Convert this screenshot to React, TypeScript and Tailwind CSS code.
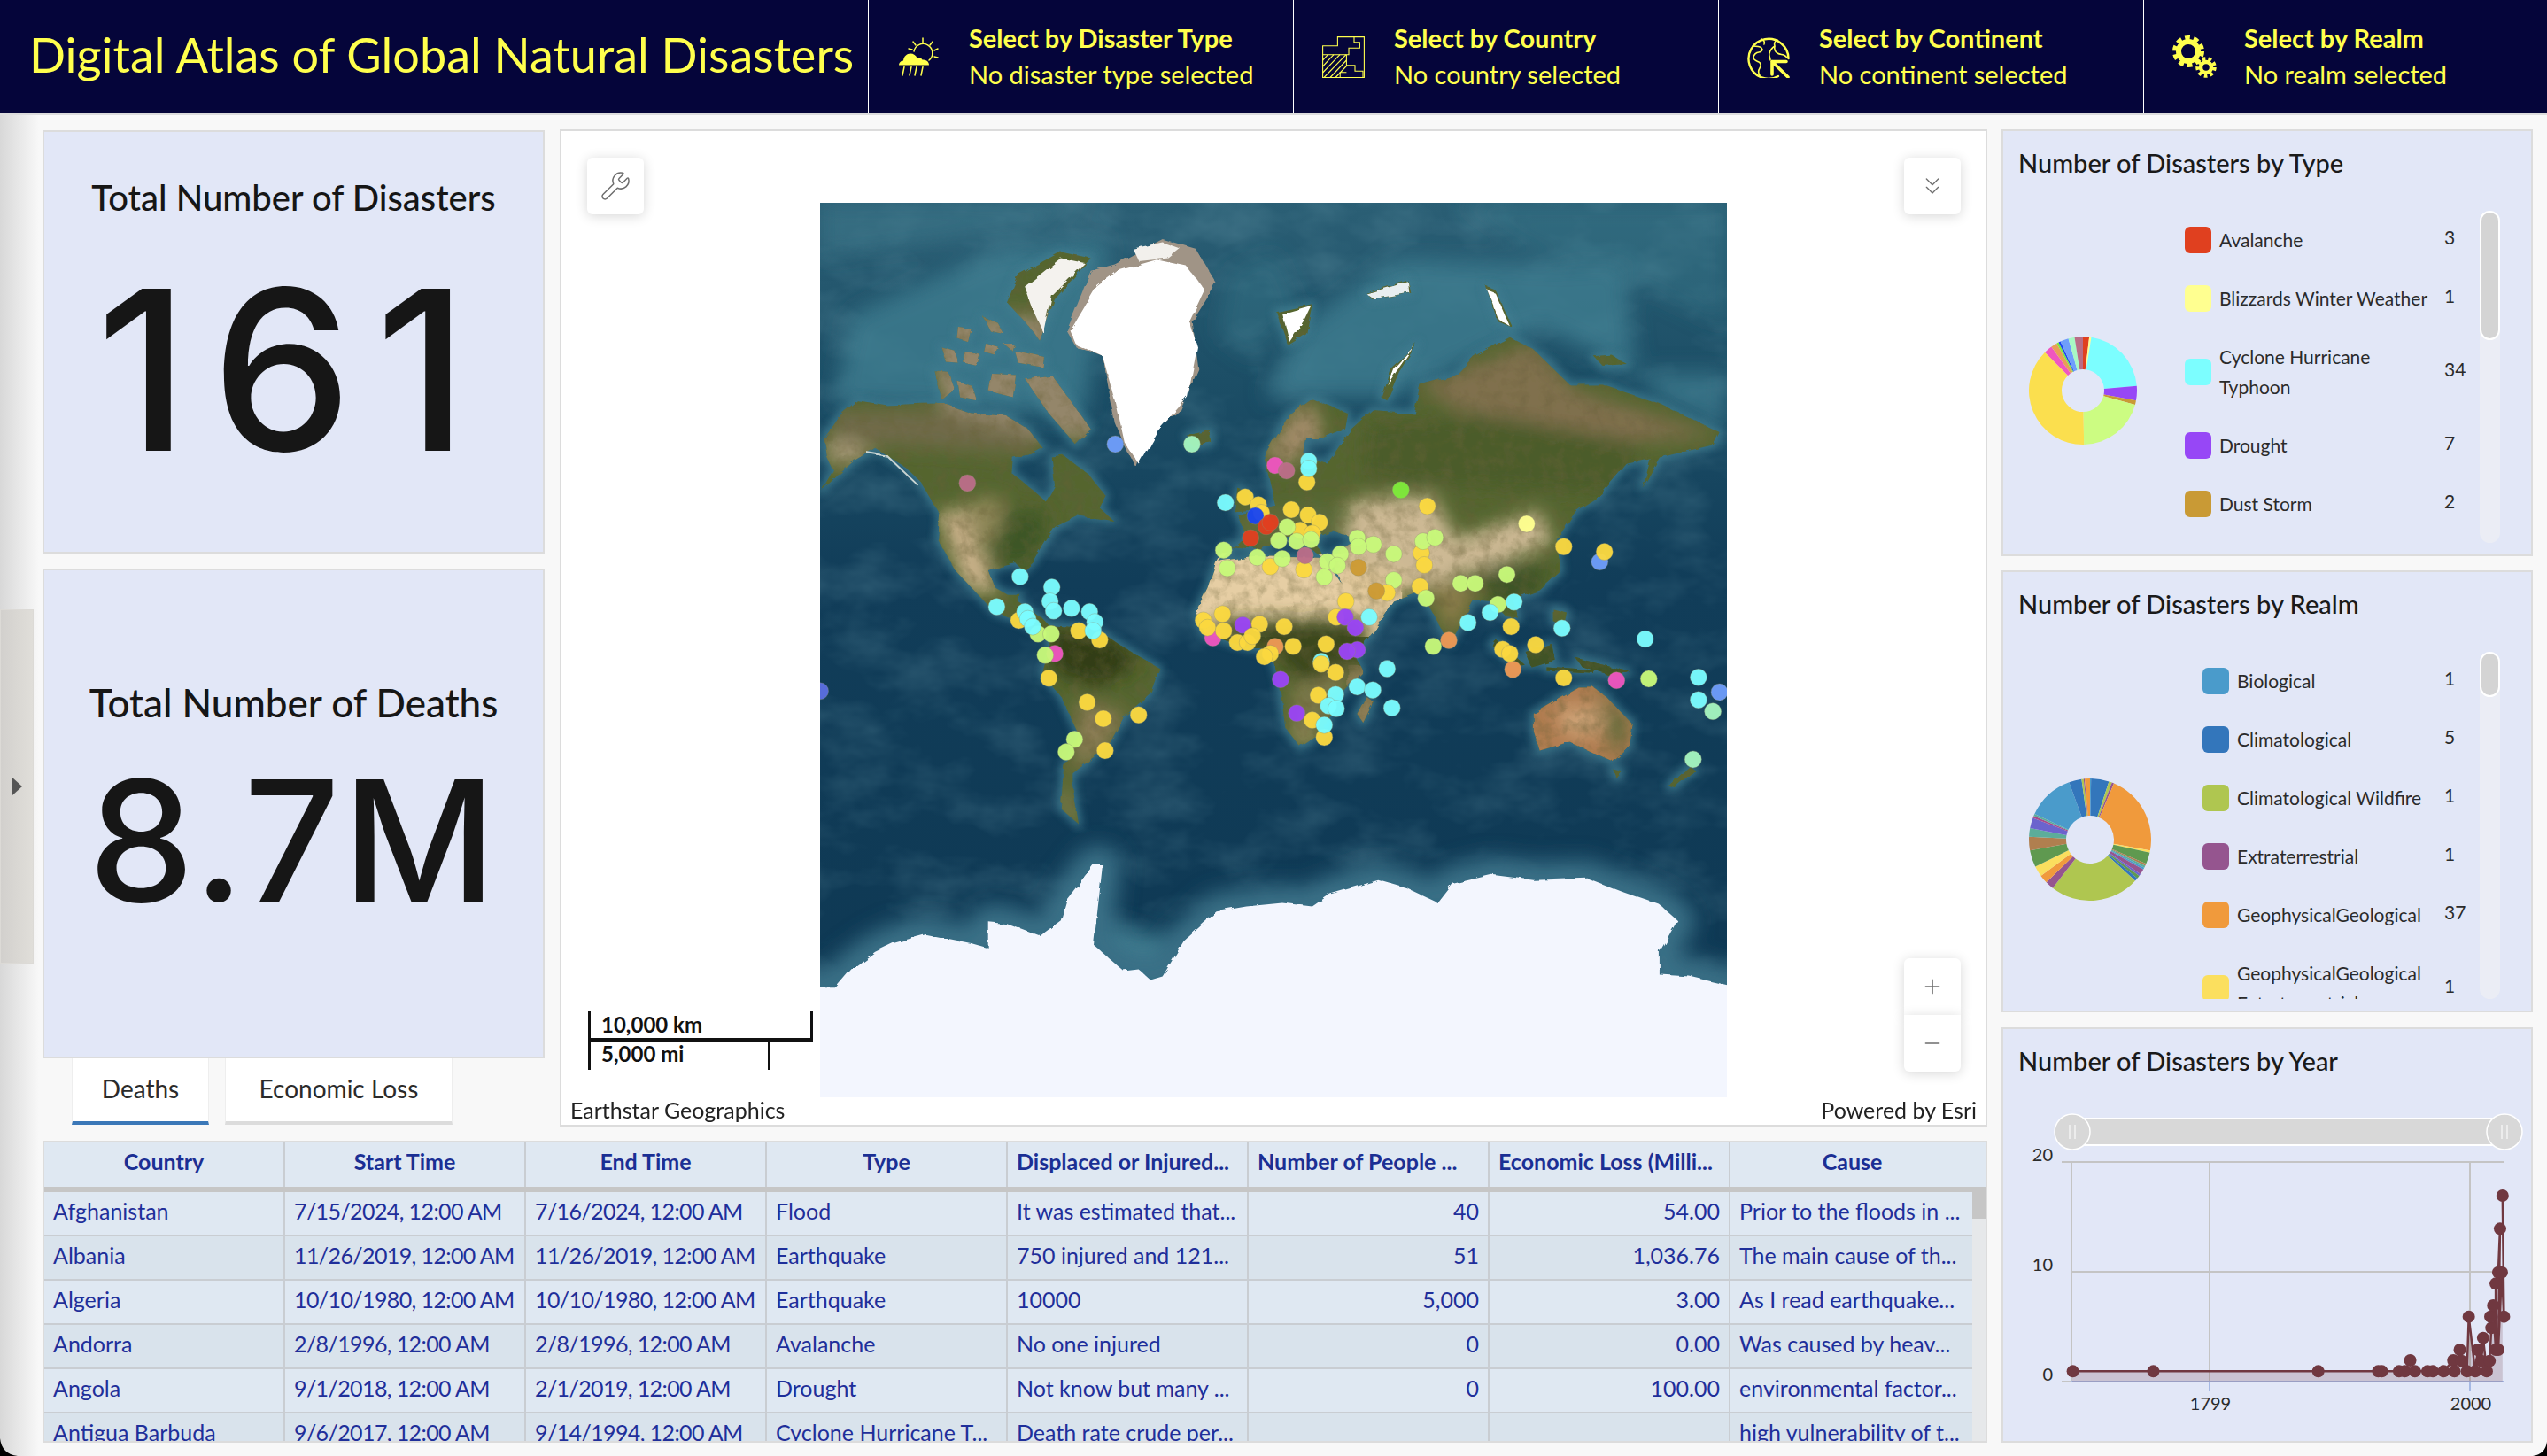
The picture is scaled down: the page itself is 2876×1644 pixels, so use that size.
import { ChevronsDown, Minus, Plus, Wrench } from "lucide-react";

const FONT = "font-['Lato','Open_Sans',sans-serif]";

// map helpers: outlines were traced in two crop spaces, both end up in 1024x1010 map space
const z8 = (x: number, y: number) => [(x - 38) / 1.479, (y - 25) / 2.8];
const z9 = (x: number, y: number) => [(x - 38) / 1.479, y / 2.53 + 411];
const pts = (f: (x: number, y: number) => number[], s: string) =>
  s
    .trim()
    .split(/\s+/)
    .map(p => {
      const [x, y] = p.split(",").map(Number);
      return f(x, y)
        .map(n => n.toFixed(1))
        .join(",");
    })
    .join(" ");

const LAND_N = [
  "45,770 75,690 100,650 150,665 210,660 245,660 290,690 350,700 385,740 410,800 390,820 360,830 358,880 395,935 415,970 430,920 425,830 445,825 485,880 515,950 505,990 528,1030 470,1015 430,1050 410,1110 395,1160 378,1190 365,1165 340,1175 320,1190 330,1240 350,1262 372,1262 368,1285 410,1340 432,1385 400,1375 370,1345 330,1320 300,1260 265,1190 235,1090 238,1010 205,905 180,860 130,800 95,840 60,900 40,935 60,870 50,830",
  "780,830 820,700 860,645 920,690 915,740 880,770 850,770 845,830 885,850 925,740 960,680 1030,690 1040,600 1100,570 1130,510 1190,450 1230,490 1290,600 1345,600 1440,660 1540,750 1530,790 1440,830 1412,925 1425,835 1385,850 1340,950 1300,1000 1268,1090 1275,1190 1240,1250 1195,1280 1205,1340 1185,1335 1160,1285 1130,1280 1090,1420 1055,1300 1040,1255 990,1290 945,1325 905,1215 890,1140 935,1090 895,1060 860,1082 880,1150 830,1080 800,1090 770,1120 715,1110 700,1165 750,1075 735,1010 800,985 790,915",
  "1330,510 1360,505 1385,535 1345,540",
  "240,480 262,492 268,530 248,528",
  "280,495 305,505 300,540 278,530",
  "270,420 290,425 285,465 268,455",
  "310,385 335,405 345,440 322,430",
  "315,470 335,480 330,505 312,495",
  "362,492 412,512 410,545 368,530",
  "345,470 362,470 358,492",
  "228,555 252,560 262,610 240,645",
  "268,590 292,605 300,650 272,640",
  "325,565 365,570 360,640 320,620",
  "380,580 425,570 490,740 465,790 420,690",
  "350,340 370,250 440,180 490,200 430,330 405,460 380,400",
  "650,760 690,745 692,785 660,795",
  "735,925 752,945 762,995 730,1000",
  "800,370 860,345 850,440 820,475",
  "1035,470 990,550 975,640 985,650 1005,560",
  "1150,290 1165,300 1195,420 1170,400",
  "950,310 1020,270 1025,310 960,330",
  "880,1150 700,1200 680,1290",
];
const LAND_S = [
  "700,-15 760,-30 880,-25 905,40 950,120 1000,90 965,180 930,250 945,300 900,380 880,470 840,515 815,460 805,330 790,240 740,225 680,190 665,130 685,60",
  "950,370 962,385 945,445 935,420",
  "420,165 465,170 510,190 545,230 605,290 590,360 545,430 520,510 460,590 460,630 470,735 440,690 445,570 470,480 440,370 410,310 420,250",
  "1230,420 1280,370 1305,345 1330,345 1350,370 1395,450 1390,510 1360,555 1340,540 1290,500 1240,525 1230,470",
  "1165,205 1215,280 1200,285 1160,225",
  "1215,240 1260,220 1265,265 1225,285",
  "1262,120 1285,130 1280,170 1262,155",
  "1300,260 1390,300 1370,315 1310,285",
  "1490,570 1500,580 1465,630 1455,625",
  "1362,578 1378,585 1368,605",
  "1250,285 1330,295 1330,303 1250,295",
];
const ANTARCTICA =
  "-60,1210 38,1200 65,1200 90,1150 130,1100 160,1075 215,1050 290,1075 320,1090 320,1015 350,1020 405,1055 440,1010 450,950 495,850 510,850 495,1080 545,1155 570,1150 590,1180 610,1170 645,1070 700,985 750,970 810,960 860,970 890,935 970,895 1020,920 1070,960 1095,905 1160,880 1230,895 1320,890 1380,930 1440,965 1470,1010 1440,1100 1440,1165 1490,1170 1553,1195 1640,1210 1640,1600 -60,1600";

const REGIONS_N: [string, string][] = [
  ["#6f6b48", "60,680 400,680 400,820 60,780"],
  ["#94866a", "220,380 510,380 510,780 400,760 240,680"],
  ["#cdb48c", "235,1000 285,1000 335,1260 280,1240"],
  ["#8f8758", "285,960 345,960 345,1090 285,1090"],
  ["#3c5628", "345,1000 420,1000 400,1170 320,1170"],
  ["#a89a78", "40,770 110,790 130,830 60,860"],
  ["#4b5c2c", "950,720 1400,680 1400,950 950,900"],
  ["#806f4e", "1040,600 1230,470 1300,620 1540,760 1400,780 1100,680"],
  ["#cdb994", "925,965 1060,950 1100,1090 1240,1000 1260,1100 1130,1190 1040,1250 900,1225"],
  ["#e0c698", "900,1150 1040,1240 960,1300 910,1220"],
  ["#8a7c4a", "1050,1220 1140,1240 1090,1400"],
  ["#3e5226", "1140,1175 1260,1175 1210,1320 1150,1270"],
  ["#5f6d3c", "740,1000 900,980 900,1080 740,1100"],
  ["#a08a68", "780,830 820,700 860,650 880,760 820,860"],
];
const REGIONS_S: [string, string][] = [
  ["#3a471c", "700,150 950,150 950,255 860,360 795,245 690,195"],
  ["#7e7a4c", "820,350 930,280 900,400 840,470"],
  ["#a59368", "820,450 880,470 840,515"],
  ["#313d16", "420,170 520,190 575,275 500,345 430,300"],
  ["#8b7d55", "470,380 550,420 520,510 460,590"],
  ["#a09070", "440,600 470,735 445,700"],
  ["#cfa478", "1270,400 1340,400 1345,480 1280,480"],
  ["#5d6a3a", "1330,345 1395,450 1360,550 1350,440"],
];

const Y = "#fbd940";
const L = "#c8f97a";
const C = "#7bfcff";
const P = "#9a45f5";
const D = "#cc9a33";
const R = "#e04020";
const K = "#ee55c0";
const O = "#ee9955";
const B = "#6e9dfa";
const M = "#a5f5c0";
const S = "#bb6d88";

const MARKERS_N: [number, number, string][] = [
  [531, 788, B], [659, 788, M], [798, 855, K], [817, 872, S], [854, 842, C], [851, 908, Y], [854, 865, C], [284, 911, S],
  [1008, 933, "#7eea3a"], [1052, 984, Y], [1218, 1040, "#ffff90"], [715, 973, C], [748, 955, Y], [770, 980, Y], [775, 1005, Y],
  [765, 1015, "#1a46f0"], [825, 995, Y], [853, 1012, Y], [872, 1035, Y], [840, 1060, Y], [860, 1070, Y], [783, 1048, R], [790, 1035, R],
  [757, 1085, R], [818, 1050, L], [804, 1093, L], [834, 1095, L], [858, 1090, L], [935, 1085, L], [962, 1105, L], [937, 1112, L],
  [712, 1123, L], [768, 1146, L], [790, 1175, Y], [810, 1150, L], [718, 1180, L], [846, 1185, Y], [848, 1140, S], [907, 1135, L],
  [885, 1160, L], [902, 1172, L], [880, 1208, L], [996, 1135, L], [1042, 1132, Y], [1047, 1170, Y], [1045, 1095, L], [1065, 1083, L],
  [996, 1218, L], [985, 1258, Y], [1040, 1238, Y], [1050, 1275, L], [1108, 1228, L], [1132, 1228, L], [1185, 1200, L], [1170, 1295, L],
  [1280, 1112, Y], [1340, 1160, B], [1348, 1128, Y], [937, 1178, D], [967, 1252, D], [916, 1285, Y],
  [372, 1207, C], [425, 1240, C], [422, 1285, C], [428, 1315, C], [458, 1307, C], [333, 1302, C], [370, 1345, Y], [470, 1378, Y],
  [505, 1407, Y], [402, 1388, L], [424, 1388, L], [380, 1318, C], [385, 1340, C], [393, 1365, C], [488, 1318, C], [497, 1350, C],
  [494, 1378, C], [430, 1450, K], [414, 1455, L], [420, 1528, Y],
  [694, 1400, K], [678, 1345, Y], [710, 1325, Y], [685, 1368, Y], [712, 1378, Y], [772, 1357, Y], [813, 1365, Y], [744, 1360, P],
  [735, 1415, Y], [752, 1415, Y], [760, 1395, Y], [798, 1428, O], [828, 1427, Y], [883, 1420, Y], [790, 1450, Y], [780, 1460, Y],
  [875, 1475, C], [875, 1483, Y], [899, 1510, Y], [900, 1335, Y], [915, 1335, P], [932, 1368, P], [955, 1335, C], [935, 1438, P],
  [918, 1443, P], [807, 1532, P], [1120, 1352, C], [1157, 1320, C], [1197, 1287, C], [1277, 1370, C], [1416, 1404, C], [985, 1498, C],
  [1088, 1408, O], [1195, 1500, O], [1062, 1427, L], [1192, 1365, Y], [1233, 1422, Y], [1178, 1437, Y], [1190, 1450, Y], [1280, 1527, Y],
  [1368, 1535, K], [1422, 1530, L], [1505, 1525, C],
];
const MARKERS_S: [number, number, string][] = [
  [935, 343, C], [961, 352, C], [993, 403, C], [870, 367, Y], [899, 365, C], [887, 397, C], [900, 405, C], [860, 438, Y], [880, 487, Y],
  [880, 452, C], [834, 418, P], [484, 387, Y], [511, 434, Y], [570, 423, Y], [514, 525, Y], [463, 493, L], [449, 529, L], [1505, 380, C],
  [1540, 358, B], [1529, 413, M], [1496, 550, M], [38, 355, "#5b6ee0"],
];

const WorldMap = () => (
  <svg viewBox="0 0 1024 1010" className="block h-[1010px] w-[1024px]">
    <defs>
      <linearGradient id="sea" x1="0" y1="0" x2="0" y2="1">
        <stop offset="0" stopColor="#2b5f75" />
        <stop offset="0.2" stopColor="#1c4e66" />
        <stop offset="0.42" stopColor="#113d59" />
        <stop offset="1" stopColor="#0e3853" />
      </linearGradient>
      <filter id="b3" x="-20%" y="-20%" width="140%" height="140%">
        <feGaussianBlur stdDeviation="5" />
      </filter>
      <filter id="b8" x="-20%" y="-20%" width="140%" height="140%">
        <feGaussianBlur stdDeviation="10" />
      </filter>
      <filter id="b14" x="-20%" y="-20%" width="140%" height="140%">
        <feGaussianBlur stdDeviation="12" />
      </filter>
      <filter id="rough" x="-5%" y="-5%" width="110%" height="110%">
        <feTurbulence type="fractalNoise" baseFrequency="0.06" numOctaves="3" seed="4" />
        <feDisplacementMap in="SourceGraphic" scale="6" />
      </filter>
      <filter id="grain" x="0" y="0" width="100%" height="100%">
        <feTurbulence type="fractalNoise" baseFrequency="0.07" numOctaves="4" seed="9" />
        <feColorMatrix values="0 0 0 0 0.14  0 0 0 0 0.12  0 0 0 0 0.04  0 0 0 0.9 -0.36" />
      </filter>
      <filter id="swell" x="0" y="0" width="100%" height="100%">
        <feTurbulence type="fractalNoise" baseFrequency="0.012 0.02" numOctaves="4" seed="21" />
        <feColorMatrix values="0 0 0 0 0.2  0 0 0 0 0.42  0 0 0 0 0.5  0 0 0 0.5 -0.22" />
      </filter>
      <clipPath id="land">
        {LAND_N.map((p, i) => (
          <polygon key={i} points={pts(z8, p)} />
        ))}
        {LAND_S.map((p, i) => (
          <polygon key={i} points={pts(z9, p)} />
        ))}
      </clipPath>
    </defs>
    <rect width="1024" height="1010" fill="url(#sea)" />
    <rect width="1024" height="1010" filter="url(#swell)" />
    {/* continental shelves */}
    <g filter="url(#b14)" fill="#3f7d90">
      <polygon points={pts(z8, "780,640 840,420 1000,200 1380,230 1400,560 1240,420 1000,640")} opacity="0.8" />
      <polygon points={pts(z8, "60,660 90,380 340,170 520,140 480,700 300,680")} opacity="0.8" />
      <polygon points={pts(z8, "700,440 720,240 800,180 840,360 760,520")} opacity="0.35" />
      <polygon points={pts(z8, "1400,560 1553,560 1553,750 1440,650")} opacity="0.7" />
      <polygon points={pts(z8, "38,25 500,25 400,110 38,200")} opacity="0.5" />
      <polygon points={pts(z8, "1100,25 1553,25 1553,420 1420,300 1220,170")} opacity="0.35" />
      <polygon points={pts(z9, "500,1010 640,1070 600,1180 545,1155 500,1090")} />
    </g>
    <g filter="url(#b3)" fill="#3f7d90" stroke="#3f7d90" strokeWidth="8" strokeLinejoin="round" opacity="0.8">
      {LAND_N.map((p, i) => (
        <polygon key={i} points={pts(z8, p)} />
      ))}
      {LAND_S.map((p, i) => (
        <polygon key={i} points={pts(z9, p)} />
      ))}
    </g>
    <g filter="url(#b14)" fill="none" stroke="#3a7187" strokeWidth="40" strokeLinejoin="round">
      <polygon points={pts(z9, ANTARCTICA)} />
    </g>
    {/* land */}
    <g filter="url(#rough)">
      <g clipPath="url(#land)">
        <rect width="1024" height="1010" fill="#54652f" />
        <polygon points={pts(z9, "660,-40 1010,-40 1010,200 660,200")} fill="#e6cea4" />
        <polygon points={pts(z9, "920,280 960,280 960,460 920,460")} fill="#8d7d55" />
        <polygon points={pts(z9, "1220,330 1400,330 1400,560 1220,560")} fill="#b07c50" />
        <polygon points={pts(z9, "1160,200 1400,200 1400,320 1160,320")} fill="#3f5226" />
        <g filter="url(#b8)">
          {REGIONS_N.map(([c, p], i) => (
            <polygon key={i} points={pts(z8, p)} fill={c} />
          ))}
          {REGIONS_S.map(([c, p], i) => (
            <polygon key={i} points={pts(z9, p)} fill={c} />
          ))}
        </g>
        <rect width="1024" height="800" filter="url(#grain)" />
      </g>
    </g>
    {/* ice */}
    <g filter="url(#rough)">
      <polygon points={pts(z8, "450,430 490,240 530,220 610,140 665,170 700,280 660,400 670,550 640,680 580,770 565,860 545,790 530,720 510,510 465,480")} fill="#a09486" />
      <polygon points={pts(z8, "456,430 500,290 535,240 600,205 650,225 680,300 655,400 668,480 652,640 600,750 570,850 545,780 530,650 510,510 465,472")} fill="#fff" />
      <polygon points={pts(z8, "560,170 610,150 640,170 620,200 570,210")} fill="#f2f0ec" />
      <polygon points={pts(z8, "380,290 440,200 480,215 425,320 412,440 395,370")} fill="#f4f2ee" />
      <polygon points={pts(z8, "810,375 858,350 845,400 822,465")} fill="#fff" />
      <polygon points={pts(z8, "1030,478 995,550 985,600 1000,560")} fill="#fff" />
      <polygon points={pts(z8, "1152,300 1165,310 1190,415 1172,395")} fill="#fff" />
      <polygon points={pts(z8, "950,312 1020,275 1022,310 962,328")} fill="#e8eef0" />
      <polyline points={pts(z8, "115,815 150,825 200,915")} fill="none" stroke="#f2f2ea" strokeWidth="2" opacity="0.8" />
      <polygon points={pts(z9, ANTARCTICA)} fill="#f3f6fe" />
    </g>
    {MARKERS_N.map(([x, y, c], i) => {
      const [cx, cy] = z8(x, y);
      return <circle key={i} cx={cx} cy={cy} r="9.5" fill={c} fillOpacity="0.96" stroke="#8f8f70" strokeOpacity="0.35" />;
    })}
    {MARKERS_S.map(([x, y, c], i) => {
      const [cx, cy] = z9(x, y);
      return <circle key={i} cx={cx} cy={cy} r="9.5" fill={c} fillOpacity="0.96" stroke="#8f8f70" strokeOpacity="0.35" />;
    })}
  </svg>
);

const DisasterIcon = () => (
  <svg viewBox="14 10 50 46" className="h-[46px] w-[50px]" fill="none" stroke="#ffff4d" strokeWidth="1.5" strokeLinecap="round">
    <path d="M33 27a10.5 10.5 0 1 1 17 10" />
    <path d="M43 12v5M32 16l3 4M54 16l-3 4M27 24l4 1M60 24l-4 2M60 34l-4-1" />
    <path d="M16 42.5c0-3 2.500-5 5-5 .5-5 4-8 8-8 3.500 0 6.500 2 7.500 5 2.500-1 5 0 6 2 4.500 0 7.500 2 7.500 6Z" fill="#ffff4d" stroke="none" />
    <path d="M22 44.500l-2 9.500M30 44.500l-2 9.500M36 44.500l-2 9.500M43 44.500l-2 9.500" />
  </svg>
);

const CountryIcon = () => (
  <svg viewBox="0 0 48 47" className="h-[47px] w-[48px]" fill="none" stroke="#ffff4d" strokeWidth="1.1">
    <path d="M17.400 .6H47.400V46.500H.6V10.700H17.400Z" />
    <path d="M.6 20.700H30V13.300H42.400V6.700H36V.6" />
    <path d="M27.400 20.700V32.700H37V39.300H46V46.500" />
    <path d="M20.200 46.500V40.700H27.400" />
    <path d="M.6 27L6.500 20.700M.6 34L13 20.700M.6 41L20 20.700M2 46.500L27 20.700M9 46.500L27.400 27M15 46.500L27.400 33.500" />
  </svg>
);

const ContinentIcon = () => (
  <svg viewBox="0 0 48 47" className="h-[47px] w-[48px]" fill="none" stroke="#ffff4d" strokeWidth="2" strokeLinecap="round">
    <path d="M35 45A22.500 22.500 0 1 1 46.500 25" strokeWidth="2.400" />
    <path d="M6 11c4 0 8 0 10 2s0 5-3 5-6 3-6 6 4 4 6 5 3 4 1 7-2 5 0 8" strokeWidth="1.600" />
    <path d="M16 3c3 1 4 4 3 6M34 4c-3 1-4 4-3 7-3 2-5 4-6 8-1 3 1 4 1 8M31 11c-1 4 0 6 3 8s5 1 7 2 3 2 4 3" strokeWidth="1.600" />
    <path d="M28 28.500H44M28 28.500V43M28 28.500L46 46" strokeWidth="3.600" />
  </svg>
);

const RealmIcon = () => (
  <svg viewBox="0 0 50 48" className="h-[48px] w-[50px]" fill="none" stroke="#ffff4d">
    <circle cx="18" cy="18" r="11" strokeWidth="6" />
    <circle cx="18" cy="18" r="15" strokeWidth="6" strokeDasharray="5.500 4" />
    <circle cx="38" cy="36" r="6" strokeWidth="4.500" />
    <circle cx="38" cy="36" r="9.500" strokeWidth="4.500" strokeDasharray="3.600 3.100" />
  </svg>
);

const HEADER_CELLS = [
  { icon: <DisasterIcon />, title: "Select by Disaster Type", sub: "No disaster type selected" },
  { icon: <CountryIcon />, title: "Select by Country", sub: "No country selected" },
  { icon: <ContinentIcon />, title: "Select by Continent", sub: "No continent selected" },
  { icon: <RealmIcon />, title: "Select by Realm", sub: "No realm selected" },
];

const TYPE_SLICES: [number, string][] = [
  [3, "#e0401f"], [1, "#ffff90"], [34, "#7cfeff"], [7, "#9747f6"], [2, "#c99a35"], [33, "#ccfc82"], [61, "#fbdf4e"],
  [4, "#f056c0"], [3, "#e89f58"], [1, "#7eea3a"], [1, "#1a46f0"], [4, "#6f9efb"], [3, "#a8f8c4"], [4, "#b96d86"],
];
const REALM_SLICES: [number, string][] = [
  [1, "#4a9bcb"], [17, "#3376bb"], [3, "#afc650"], [2, "#95558f"], [77, "#f09a3c"], [2, "#fbdf5e"], [11, "#5f9950"], [2, "#b07f4f"],
  [2, "#5cad9a"], [2, "#4a9bcb"], [5, "#95558f"], [2, "#6b63cd"], [3, "#5f9950"], [3, "#3376bb"], [85, "#afc650"], [8, "#95558f"],
  [8, "#f09a3c"], [10, "#fbdf5e"], [16, "#5f9950"], [13, "#b07f4f"], [8, "#5cad9a"], [10, "#6b63cd"], [2, "#a84a8a"], [2, "#5cad9a"],
  [45, "#4a9bcb"], [12, "#3376bb"], [2, "#afc650"], [1, "#95558f"], [5, "#f09a3c"],
];

const Donut = ({ slices, r, inner }: { slices: [number, string][]; r: number; inner: number }) => {
  const total = slices.reduce((sum, s) => sum + s[0], 0);
  let run = 0;
  return (
    <svg width={r * 2} height={r * 2} viewBox={`${-r} ${-r} ${r * 2} ${r * 2}`}>
      {slices.map(([v, c], i) => {
        const a0 = (run / total) * Math.PI * 2;
        run += v;
        const a1 = (run / total) * Math.PI * 2;
        const big = a1 - a0 > Math.PI ? 1 : 0;
        const d = `M${Math.sin(a0) * r} ${-Math.cos(a0) * r}A${r} ${r} 0 ${big} 1 ${Math.sin(a1) * r} ${-Math.cos(a1) * r}L${
          Math.sin(a1) * inner
        } ${-Math.cos(a1) * inner}A${inner} ${inner} 0 ${big} 0 ${Math.sin(a0) * inner} ${-Math.cos(a0) * inner}Z`;
        return <path key={i} d={d} fill={c} />;
      })}
    </svg>
  );
};

const LegendRow = ({ color, label, value }: { color: string; label: string; value: string }) => (
  <div className="flex items-center py-[16px] text-[21px] leading-[34px] text-[#2b2b2b]">
    <div className="mr-[9px] h-[30px] w-[30px] shrink-0 rounded-[6px]" style={{ backgroundColor: color }} />
    <div className="min-w-0 flex-1">{label}</div>
    <div className="-mt-[6px] w-[40px] shrink-0">{value}</div>
  </div>
);

const TYPE_LEGEND = [
  { color: "#e0401f", label: "Avalanche", value: "3" },
  { color: "#ffff90", label: "Blizzards Winter Weather", value: "1" },
  { color: "#7cfeff", label: "Cyclone Hurricane Typhoon", value: "34" },
  { color: "#9747f6", label: "Drought", value: "7" },
  { color: "#c99a35", label: "Dust Storm", value: "2" },
];
const REALM_LEGEND = [
  { color: "#4a9bcb", label: "Biological", value: "1" },
  { color: "#3376bb", label: "Climatological", value: "5" },
  { color: "#afc650", label: "Climatological Wildfire", value: "1" },
  { color: "#95558f", label: "Extraterrestrial", value: "1" },
  { color: "#f09a3c", label: "GeophysicalGeological", value: "37" },
  { color: "#fbdf5e", label: "GeophysicalGeological Extraterrestrial", value: "1" },
];

const TABLE_HEAD = ["Country", "Start Time", "End Time", "Type", "Displaced or Injured...", "Number of People ...", "Economic Loss (Milli...", "Cause"];
const TABLE_ROWS = [
  ["Afghanistan", "7/15/2024, 12:00 AM", "7/16/2024, 12:00 AM", "Flood", "It was estimated that...", "40", "54.00", "Prior to the floods in ..."],
  ["Albania", "11/26/2019, 12:00 AM", "11/26/2019, 12:00 AM", "Earthquake", "750 injured and 121...", "51", "1,036.76", "The main cause of th..."],
  ["Algeria", "10/10/1980, 12:00 AM", "10/10/1980, 12:00 AM", "Earthquake", "10000", "5,000", "3.00", "As I read earthquake..."],
  ["Andorra", "2/8/1996, 12:00 AM", "2/8/1996, 12:00 AM", "Avalanche", "No one injured", "0", "0.00", "Was caused by heav..."],
  ["Angola", "9/1/2018, 12:00 AM", "2/1/2019, 12:00 AM", "Drought", "Not know but many ...", "0", "100.00", "environmental factor..."],
  ["Antigua Barbuda", "9/6/2017, 12:00 AM", "9/14/1994, 12:00 AM", "Cyclone Hurricane T...", "Death rate crude per...", "", "", "high vulnerability of t..."],
];

// year chart points, x/y in page pixels
const YEAR_POINTS = [
  [248, 1225], [472, 1225], [931, 1225], [1098, 1225], [1108, 1225], [1156, 1225], [1172, 1225], [1187, 1188], [1200, 1225], [1235, 1225],
  [1250, 1225], [1280, 1225], [1307, 1188], [1310, 1225], [1325, 1152], [1330, 1190], [1345, 1225], [1350, 1040], [1368, 1225], [1375, 1152],
  [1385, 1190], [1390, 1112], [1400, 1225], [1408, 1190], [1413, 1078], [1410, 1040], [1418, 1002], [1425, 1152], [1425, 928], [1432, 890],
  [1437, 742], [1432, 1152], [1442, 890], [1448, 1040], [1444, 630],
].map(([x, y]) => [2240 + x / 2.465, 1140 + y / 3]);

const YearChart = () => {
  const line = YEAR_POINTS.map(p => p.join(",")).join(" ");
  const last = YEAR_POINTS[YEAR_POINTS.length - 1];
  return (
    <svg viewBox="2262 1217 596 410" className="block h-[410px] w-[596px] font-['Lato']">
      <rect x="2339" y="1263" width="489" height="30" fill="#d8d8d8" stroke="#fff" strokeWidth="2" />
      {[2340, 2828].map(x => (
        <g key={x}>
          <circle cx={x} cy="1278" r="20" fill="#d8d8d8" stroke="#fff" strokeWidth="1.500" />
          <path d={`M${x - 3} 1270v16M${x + 3} 1270v16`} stroke="#f2f2f2" strokeWidth="1.500" />
        </g>
      ))}
      <g stroke="#c4c4c4" strokeWidth="2">
        <path d="M2328 1312H2828M2339 1436H2828M2328 1560H2339" />
        <path d="M2339 1312V1560M2495 1312V1560M2789 1312V1560" />
      </g>
      <path d="M2339 1560H2828M2495 1560V1571M2789 1560V1571" stroke="#a5b8e4" strokeWidth="2" fill="none" />
      <polygon points={`2340,1560 2340,1548 ${line} ${last[0]},1560`} fill="#703840" fillOpacity="0.2" />
      <polyline points={line} fill="none" stroke="#703840" strokeWidth="2.500" />
      {YEAR_POINTS.map(([x, y], i) => (
        <circle key={i} cx={x} cy={y} r="7" fill="#703840" />
      ))}
      <g fontSize="20" fill="#2b2b2b">
        <text x="2318" y="1311" textAnchor="end">20</text>
        <text x="2318" y="1435" textAnchor="end">10</text>
        <text x="2318" y="1559" textAnchor="end">0</text>
        <text x="2496" y="1592" textAnchor="middle">1799</text>
        <text x="2790" y="1592" textAnchor="middle">2000</text>
      </g>
    </svg>
  );
};

const ChartPanel = ({ title, className, children }: { title: string; className: string; children: React.ReactNode }) => (
  <div className={`${className} border-2 border-[#dcdcdc] bg-[#e2e7f7]`}>
    <div className="pl-[17px] pt-[18px] pb-[1px] text-[29px] font-medium leading-[36px] text-[#1a1a1a]">{title}</div>
    {children}
  </div>
);

const Scrollbar = ({ thumb }: { thumb: string }) => (
  <div className="h-full w-[23px] shrink-0 rounded-full bg-[#ebedf5]">
    <div className={`${thumb} rounded-full border-2 border-white bg-[#d4d4d4]`} />
  </div>
);

const StatCard = ({ title, value, className, titleClass, valueClass }: { title: string; value: string; className: string; titleClass: string; valueClass: string }) => (
  <div className={`${className} flex flex-col items-center border-2 border-[#dcdcdc] bg-[#e2e7f7] text-[#161616]`}>
    <div className={`${titleClass} font-medium leading-[50px]`}>{title}</div>
    <div className={`${valueClass} font-['Inter',sans-serif] font-medium leading-[200px]`}>{value}</div>
  </div>
);

const MapButton = ({ children, className }: { children: React.ReactNode; className: string }) => (
  <div className={`${className} absolute flex h-[64px] w-[64px] items-center justify-center rounded-[6px] bg-white text-[#6e6e6e] shadow-[0_2px_14px_rgba(0,0,0,0.16)]`}>
    {children}
  </div>
);

export default function App() {
  return (
    <div className={`${FONT} relative h-[1644px] w-[2876px] overflow-hidden bg-[#f8f8f8]`}>
      <header className="flex h-[130px] overflow-hidden border-b-2 border-[#dcdcdc] bg-[#05053a] text-[#ffff4d]">
        <div className="flex w-[980px] shrink-0 items-center whitespace-nowrap pb-[5px] pl-[33px] text-[54px] leading-none">Digital Atlas of Global Natural Disasters</div>
        {HEADER_CELLS.map(cell => (
          <div key={cell.title} className="flex w-[480px] shrink-0 items-center border-l border-white">
            <div className="ml-[32px] flex w-[81px] shrink-0 items-center">{cell.icon}</div>
            <div className="pb-[3px] text-[29px] leading-[41px]">
              <div className="font-bold">{cell.title}</div>
              <div>{cell.sub}</div>
            </div>
          </div>
        ))}
      </header>

      <div className="flex h-[1514px] bg-[linear-gradient(90deg,#d8d8d8,#f8f8f8_44px)] pl-[48px] pt-[16px]">
        <div className="flex w-[2196px] shrink-0 flex-col">
          <div className="flex h-[1126px]">
            <div className="flex w-[567px] shrink-0 flex-col pt-px">
              <StatCard title="Total Number of Disasters" value="161" className="h-[478px] pt-[49px]" titleClass="text-[40px]" valueClass="mt-[70px] text-[252px] tracking-[26px]" />
              <StatCard title="Total Number of Deaths" value="8.7M" className="mt-[17px] h-[553px] pt-[124px]" titleClass="text-[44px]" valueClass="mt-[31px] text-[190px] tracking-[3px]" />
              <div className="flex h-[75px] pl-[33px] text-[28px] text-[#2b2b2b]">
                <div className="flex h-full w-[155px] items-center justify-center border-x border-b-[4px] border-x-[#eeeeee] border-b-[#3b78b8] bg-white pb-[4px]">Deaths</div>
                <div className="ml-[18px] flex h-full w-[257px] items-center justify-center border-x border-b-[4px] border-x-[#eeeeee] border-b-[#dcdcdc] bg-white pb-[4px]">Economic Loss</div>
              </div>
            </div>

            <div className="relative ml-[17px] w-[1612px] border-2 border-[#dcdcdc] bg-white pt-[81px]">
              <div className="mx-auto w-[1024px]">
                <WorldMap />
              </div>
              <MapButton className="left-[29px] top-[30px]">
                <Wrench size={36} strokeWidth={1} />
              </MapButton>
              <MapButton className="left-[1516px] top-[30px]">
                <ChevronsDown size={32} strokeWidth={1} />
              </MapButton>
              <MapButton className="left-[1516px] top-[934px] rounded-b-none">
                <Plus size={26} strokeWidth={1.500} />
              </MapButton>
              <MapButton className="left-[1516px] top-[998px] rounded-t-none">
                <Minus size={26} strokeWidth={1.500} />
              </MapButton>
              <div className="absolute left-[30px] top-[993px] w-[254px] text-[24px] font-bold leading-[32px] text-[#111111]">
                <div className="h-[35px] border-x-[3px] border-b-[4px] border-[#111111] pl-[12px]">10,000 km</div>
                <div className="h-[32px] w-[206px] border-x-[3px] border-[#111111] pl-[12px] leading-[27px]">5,000 mi</div>
              </div>
              <div className="absolute bottom-0 left-[10px] right-[10px] flex justify-between pb-[2px] text-[25px] leading-[30px] text-[#222222]">
                <span>Earthstar Geographics</span>
                <span>Powered by Esri</span>
              </div>
            </div>
          </div>

          <div className="mt-[16px] h-[341px] overflow-hidden border-2 border-[#dcdcdc] text-[25px] text-[#1f2f9a]">
            <div className="flex h-[56px] border-b-[6px] border-[#c6c6c6] bg-[#dfe8f2] font-bold text-[#1b2f94]">
              {TABLE_HEAD.map((h, i) => (
                <div
                  key={h}
                  className={`${i === 7 ? "w-[275px]" : "w-[272px] border-r-2 border-[#c9cdd2]"} ${i >= 4 && i <= 6 ? "pl-[10px]" : "justify-center"} flex shrink-0 items-center whitespace-nowrap pb-[7px] leading-none`}
                >
                  {h}
                </div>
              ))}
            </div>
            <div className="flex">
              <div className="flex-1">
                {TABLE_ROWS.map((row, r) => (
                  <div key={row[0]} className={`${r % 2 ? "bg-[#d9e3ec]" : "bg-[#dfe8f2]"} flex h-[50px] border-b-2 border-[#c9cdd2]`}>
                    {row.map((cell, c) => (
                      <div
                        key={c}
                        className={`${c === 7 ? "flex-1" : "w-[272px] border-r-2 border-[#c9cdd2]"} ${c === 5 || c === 6 ? "pr-[10px] text-right" : c === 1 || c === 2 ? "tracking-[-0.6px]" : "pr-[4px]"} shrink-0 truncate pl-[10px] leading-[42px]`}
                      >
                        {cell}
                      </div>
                    ))}
                  </div>
                ))}
              </div>
              <div className="h-[300px] w-[15px] shrink-0 bg-[#e6e8ea]">
                <div className="h-[30px] bg-[#c6c6c6]" />
              </div>
            </div>
          </div>
        </div>

        <div className="ml-[16px] flex w-[600px] shrink-0 flex-col">
          <ChartPanel title="Number of Disasters by Type" className="h-[482px]">
            <div className="mt-[35px] flex h-[375px] pr-[35px]">
              <div className="w-[205px] shrink-0 pl-[29px] pt-[142px]">
                <Donut slices={TYPE_SLICES} r={61} inner={24} />
              </div>
              <div className="min-w-0 flex-1 overflow-hidden">
                {TYPE_LEGEND.map(row => (
                  <LegendRow key={row.label} {...row} />
                ))}
              </div>
              <Scrollbar thumb="h-[146px]" />
            </div>
          </ChartPanel>
          <ChartPanel title="Number of Disasters by Realm" className="mt-[16px] h-[499px]">
            <div className="mt-[35px] flex h-[392px] pr-[35px]">
              <div className="w-[225px] shrink-0 pl-[29px] pt-[143px]">
                <Donut slices={REALM_SLICES} r={69} inner={27} />
              </div>
              <div className="min-w-0 flex-1 overflow-hidden">
                {REALM_LEGEND.map(row => (
                  <LegendRow key={row.label} {...row} />
                ))}
              </div>
              <Scrollbar thumb="h-[51px]" />
            </div>
          </ChartPanel>
          <ChartPanel title="Number of Disasters by Year" className="mt-[17px] h-[469px]">
            <YearChart />
          </ChartPanel>
        </div>
      </div>

      <div className="absolute left-0 top-[688px] flex h-[400px] w-[38px] items-center justify-center border border-[#dcdad6] bg-[linear-gradient(90deg,#d2d0cd,#e0ded9)]">
        <div className="h-0 w-0 border-y-[10px] border-l-[11px] border-y-transparent border-l-[#555555]" />
      </div>
      <svg className="absolute bottom-0 left-0 h-[20px] w-[20px]" viewBox="0 0 20 20">
        <path d="M0 0Q2 18 20 20H0Z" fill="#000" />
      </svg>
      <svg className="absolute bottom-0 right-0 h-[16px] w-[16px]" viewBox="0 0 16 16">
        <path d="M16 0Q14 14 0 16H16Z" fill="#000" />
      </svg>
    </div>
  );
}
